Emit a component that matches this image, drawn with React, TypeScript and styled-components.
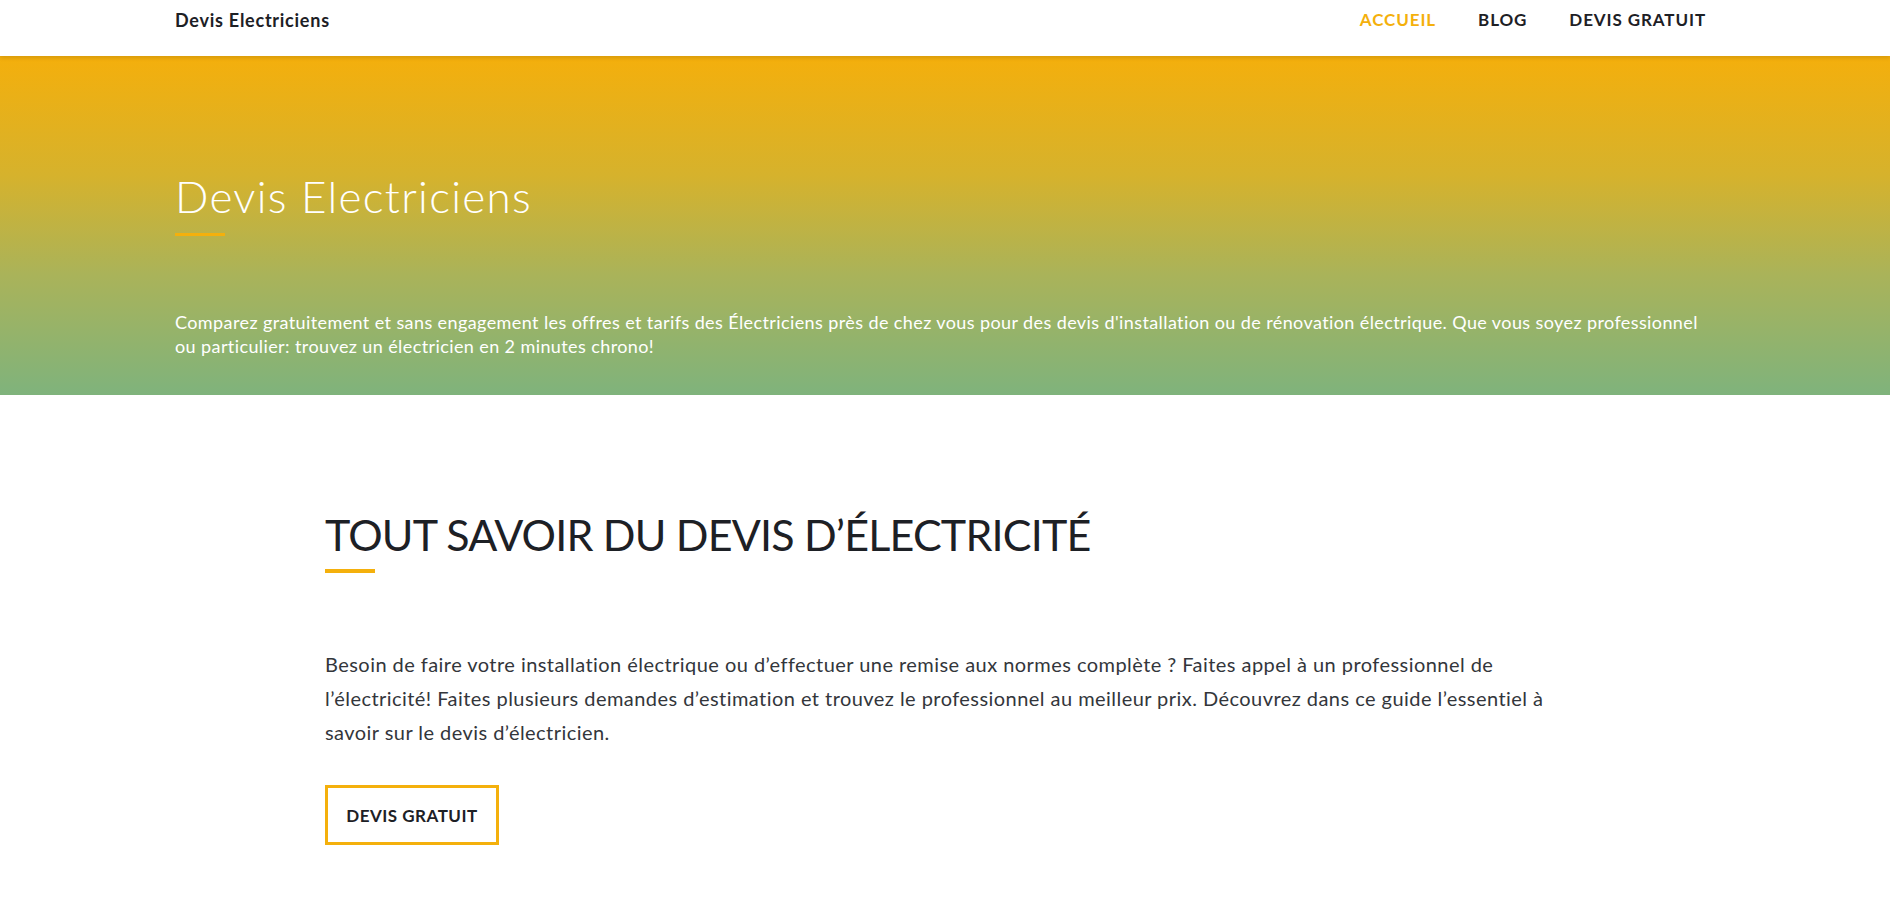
import React from "react";
import styled, { createGlobalStyle } from "styled-components";

const GlobalStyle = createGlobalStyle`
  * { box-sizing: border-box; }
  html, body { margin: 0; padding: 0; background: #ffffff; }
  body {
    font-family: Lato, "Liberation Sans", sans-serif;
    color: #33363b;
  }
`;

const ACCENT = "#f4b00c";
const DARK = "#1d2025";

const Header = styled.header`
  height: 56px;
  background: #ffffff;
  box-shadow: 0 2px 4px rgba(0, 0, 0, 0.12);
  position: relative;
  z-index: 2;
`;

const HeaderInner = styled.div`
  width: 1540px;
  margin: 0 auto;
  padding-top: 9px;
  display: flex;
  justify-content: space-between;
  align-items: flex-start;
`;

const Brand = styled.a`
  font-size: 18px;
  font-weight: 700;
  line-height: 22px;
  color: ${DARK};
  text-decoration: none;
  letter-spacing: 0.75px;
`;

const Nav = styled.nav`
  display: flex;
  gap: 42px;
  margin-right: 9px;
`;

const NavLink = styled.a<{ $active?: boolean }>`
  font-size: 17px;
  font-weight: 700;
  line-height: 22px;
  letter-spacing: 0.9px;
  text-transform: uppercase;
  text-decoration: none;
  color: ${(p) => (p.$active ? ACCENT : DARK)};
`;

const Hero = styled.section`
  background: linear-gradient(180deg, #f4af0c 0%, #d6b22c 35%, #a9b35a 65%, #7fb37c 100%);
  padding: 114px 0 37px;
`;

const HeroInner = styled.div`
  width: 1540px;
  margin: 0 auto;
`;

const HeroTitle = styled.h1`
  margin: 0;
  font-size: 44px;
  font-weight: 300;
  line-height: 1.2;
  letter-spacing: 1.3px;
  color: #ffffff;
`;

const Bar = styled.div<{ $h: number; $mt: number }>`
  width: 50px;
  height: ${(p) => p.$h}px;
  margin-top: ${(p) => p.$mt}px;
  background: ${ACCENT};
`;

const HeroText = styled.p`
  margin: 74px 0 0;
  font-size: 18px;
  line-height: 24px;
  color: #ffffff;
  letter-spacing: 0.4px;
`;

const Main = styled.main`
  width: 1250px;
  margin-left: calc(50% - 620px);
  padding: 114px 0 60px;
`;

const SectionTitle = styled.h2`
  margin: 0;
  font-size: 43px;
  font-weight: 400;
  line-height: 1.2;
  letter-spacing: -0.8px;
  text-transform: uppercase;
  color: ${DARK};
`;

const Body = styled.p`
  margin: 74px 0 0;
  font-size: 20px;
  line-height: 34px;
  color: #33363b;
  letter-spacing: 0.45px;
`;

const OutlineButton = styled.a`
  margin-top: 36px;
  display: inline-flex;
  align-items: center;
  justify-content: center;
  width: 174px;
  height: 60px;
  border: 3px solid ${ACCENT};
  font-size: 17px;
  font-weight: 700;
  letter-spacing: 0.5px;
  text-transform: uppercase;
  color: ${DARK};
  text-decoration: none;
`;

export default function App() {
  return (
    <>
      <GlobalStyle />
      <Header>
        <HeaderInner>
          <Brand href="#">Devis Electriciens</Brand>
          <Nav>
            <NavLink href="#" $active>Accueil</NavLink>
            <NavLink href="#">Blog</NavLink>
            <NavLink href="#">Devis gratuit</NavLink>
          </Nav>
        </HeaderInner>
      </Header>
      <Hero>
        <HeroInner>
          <HeroTitle>Devis Electriciens</HeroTitle>
          <Bar $h={3} $mt={10} />
          <HeroText>
            Comparez gratuitement et sans engagement les offres et tarifs des Électriciens près de chez vous pour des devis d'installation ou de rénovation électrique. Que vous soyez professionnel ou particulier: trouvez un électricien en 2 minutes chrono!
          </HeroText>
        </HeroInner>
      </Hero>
      <Main>
        <SectionTitle>Tout savoir du devis d’électricité</SectionTitle>
        <Bar $h={4} $mt={9} />
        <Body>
          Besoin de faire votre installation électrique ou d’effectuer une remise aux normes complète ? Faites appel à un professionnel de l’électricité! Faites plusieurs demandes d’estimation et trouvez le professionnel au meilleur prix. Découvrez dans ce guide l’essentiel à savoir sur le devis d’électricien.
        </Body>
        <div>
          <OutlineButton href="#">Devis gratuit</OutlineButton>
        </div>
      </Main>
    </>
  );
}
